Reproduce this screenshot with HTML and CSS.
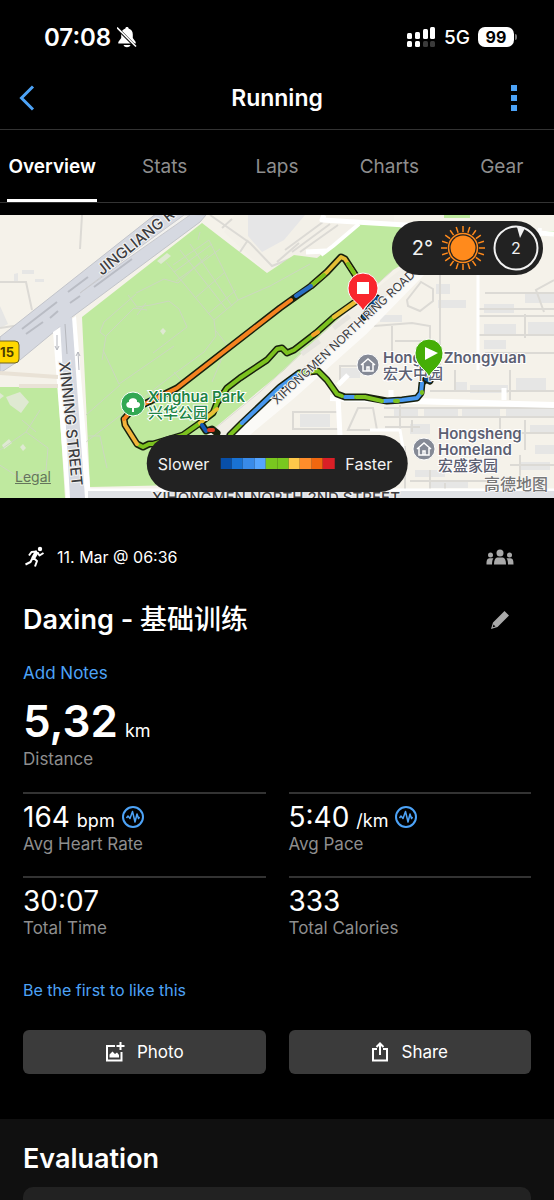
FILE: index.html
```html
<!DOCTYPE html>
<html lang="en">

<head>
    <meta charset="UTF-8">
    <meta name="viewport" content="width=device-width, initial-scale=1.0">
    <title>Running</title>
    <link rel="stylesheet" href="styles.css">
</head>

<body>
    <!-- Status bar -->
    <div class="status-bar">
        <div class="status-left">
            <span class="clock">07:08</span>
            <svg class="bell" width="20" height="22" viewBox="0 0 20 22">
                <path d="M10 1c-1 0-1.600.6-1.600 1.400C5.400 3.200 4.200 5.600 4.200 8.500v3.500L1.300 16v1.500h17.400V16l-2.900-4V8.500c0-2.900-1.200-5.300-4.200-6.100C11.600 1.600 11 1 10 1zM6.500 19c.6 1.500 1.900 2.200 3.500 2.200s2.900-.7 3.500-2.200z" fill="#fff" />
                <path d="M0 2l19 19" stroke="#000" stroke-width="3" />
                <path d="M0 1.500l19 19" stroke="#fff" stroke-width="1.600" />
            </svg>
        </div>
        <div class="status-right">
            <svg width="29" height="22" viewBox="0 0 29 22" fill="#fff">
                <rect x="0" y="7" width="5" height="6" rx="1.500" />
                <rect x="8" y="6" width="5" height="7" rx="1.500" />
                <rect x="16" y="3" width="5" height="10" rx="1.500" />
                <rect x="23" y="1" width="5" height="12" rx="1.500" />
                <rect x="0" y="15" width="5" height="6" rx="1.500" />
                <rect x="8" y="15" width="5" height="6" rx="1.500" />
                <rect x="16" y="15" width="5" height="6" rx="1.500" fill="#3a3a3a" />
                <rect x="23" y="15" width="5" height="6" rx="1.500" fill="#3a3a3a" />
            </svg>
            <span class="network">5G</span>
            <span class="battery">99</span>
        </div>
    </div>

    <!-- Header -->
    <header class="header">
        <button class="icon-button" aria-label="Back">
            <svg width="16" height="26" viewBox="0 0 16 26" fill="none" stroke="#4da3f7" stroke-width="3">
                <path d="M14 1.500L2.500 13L14 24.500" />
            </svg>
        </button>
        <h1>Running</h1>
        <button class="icon-button menu-button" aria-label="More">
            <svg width="6" height="26" viewBox="0 0 6 26" fill="#4da3f7">
                <rect width="6" height="6" />
                <rect y="10" width="6" height="6" />
                <rect y="20" width="6" height="6" />
            </svg>
        </button>
    </header>

    <!-- Tabs -->
    <nav class="tabs">
        <a href="#overview" class="tab active">Overview</a>
        <a href="#stats" class="tab">Stats</a>
        <a href="#laps" class="tab">Laps</a>
        <a href="#charts" class="tab">Charts</a>
        <a href="#gear" class="tab">Gear</a>
    </nav>

    <!-- Map -->
    <section class="map">
        <svg class="map-canvas" viewBox="0 215 554 283" preserveAspectRatio="xMidYMid slice">
            <rect x="-400" y="215" width="1400" height="283" fill="#f5f2ea" />

            <!-- Blocks and buildings -->
            <path d="M234 215H394V225L361 223L317 258L294 255L267 273L245 252L224 232z" fill="#f3f0e8" />
            <path d="M248 215H305L284 240L262 252L248 236z" fill="#e6e6e7" />
            <g fill="#e6e6e5">
                <path d="M22 270h12v4H22zM14 274l4-1v8l-4 1zM35 279h9v3H35zM0 306l8 18-8 4z" />
                <path d="M484 304h30v9h-30zM484 324h32v10h-32zM484 340h22v9h-22zM525 292h29v11h-29zM528 322h26v14h-26zM436 284h14v10h-14zM438 300h28v8h-28zM380 315h22v7h-22z" />
                <path d="M394 408h24v8h-24zM424 408h34v8h-34zM462 408h38v8h-38zM506 408h48v8h-48zM300 414h30v13h-30zM340 368h20v10h-20zM470 385h38v8h-38zM516 378h30v12h-30zM455 382h12v9h-12zM410 424h20v10h-20zM530 425h24v9h-24zM535 445h19v9h-19zM520 462h30v8h-30zM415 470h30v7h-30zM430 482h38v6h-38z" />
            </g>
            <g fill="none" stroke="#dcdad5" stroke-width="2">
                <path d="M82 215l-2 34M0 282h26l6 28M0 328l20-3M210 215l40 28 22 23 20-8M222 228l10-9M248 240l-8 12" />
                <path d="M285 250l38-28M292 252l38-28M300 252l38-27M277 262l22-19" />
                <path d="M407 300l14-18 12 7v12l-13 10-12-5zM374 326l38-3 18 3v15H395M392 326v25M440 275v90M478 275v90M478 309h76M478 316h76M478 335h76M525 314v24M485 293h69M485 353h69M554 280l-18 10 8 22" />
                <path d="M293 412h47v17h-47zM348 430l10-22h15l4 22zM384 408h170M384 417h170M400 405v30M412 420v12M500 418v14M525 420v30M385 427h35M510 433h44M405 446v50M430 470v26M445 483v14M510 465h44M410 481h78M520 455v30M340 384v-18h25M455 370v22M510 370v30M430 391h124" />
            </g>

            <!-- Parks -->
            <g fill="#bfe99f">
                <path d="M82 317L202 223L267 273L294 255L317 258L361 223L400 225L410 260L393 270L310 345L284 371L260 392L205 437L180 485L90 487z" />
                <path d="M0 387H58L65 498H0z" />
                <path d="M444 215h26v3h-26zM544 231h10v5h-10z" />
            </g>
            <g fill="#dfe9d2">
                <path d="M157 261l10-8 4 3-10 8zM160 331l3-3 3 3-3 4z" />
                <path d="M6 397l14-5 9 10-8 11-11-8zM2 445l7-6 3 4-8 6zM20 447l3-3 3 4-3 3zM0 393l4 3-4 3z" />
            </g>
            <g fill="none" stroke="#ccd8c0" stroke-width="1">
                <path d="M166 262l48 58 24-20-29-60-36 25M180 250l47 60M190 244l42 62M176 281l44-32M195 298l30-26M208 314l28-24M174 272l38-28M200 232l-2 8" />
                <path d="M102 360l4-24 28-28 13 2M105 336l-5-4 4-10 32-28M128 295l9 12 14-2 18-4 10 8 8 18-34 26M137 315l9-12M136 293l28-14 14 4 30-28" />
                <path d="M214 320l2 16-12 16-30 22-88 68M216 331l12 15M238 300l32-14 40-22M103 350l16 34 55-38M86 415l34-30M88 436h12l7 32M0 450l26-18 14-22M26 432l22 16-2 22-26 8-22-14M22 420l14 12M222 358l-10 24M174 372l10 12" />
            </g>

            <!-- Ring road -->
            <path d="M213 437L290 373L360 309L440 246" fill="none" stroke="#f1eee6" stroke-width="12" />
            <path d="M211 432L260 392L310 345L393 270M222 438L290 380L345 330M236 438L280 402" fill="none" stroke="#dfdcd5" stroke-width="1" />
            <path d="M232 442L290 394L362 330L440 250" fill="none" stroke="#fbfaf7" stroke-width="12" />
            <path d="M300 352l18-13 3 4-18 13zM332 326l16-12 3 4-16 12z" fill="#e6e4de" />

            <!-- Minor streets -->
            <g fill="none" stroke="#fff" stroke-linejoin="round">
                <path d="M306 252l20-1M324 215l-2 5 232 14" stroke-width="5" />
                <path d="M359 224l-26 22-12 9M540 228l-4 30" stroke-width="4" />
                <path d="M330 398l80 3 144 4" stroke-width="6" />
                <path d="M338 396l2 40M338 385l10-10M391 400v-10M504 400v-12" stroke-width="5" />
                <path d="M478 275v95M370 430h30l5 30" stroke-width="3" />
            </g>

            <!-- Jingliang road and Xinning street -->
            <path d="M0 337L157 213L206 215L200 222L72 317L20 360L0 373z" fill="#d6d9e1" stroke="#c2c4ca" />
            <path d="M80 293L123 262L150 243L190 215L184 215L140 247z" fill="#f2f1ee" stroke="#c8c9cd" />
            <path d="M22 329L57 302M26 334L43 322M50 318L58 311M68 292L88 277M70 303L80 296M94 287L132 259" fill="none" stroke="#b9bcc4" stroke-width="2" />
            <path d="M53 332L76 316L91 498H66z" fill="#fff" />
            <path d="M60 322L72 317L85 498H70z" fill="#d6d9e1" />
            <path d="M57 335v14M55 346l2 4 2-4M65 324l2 30M78 352l1 18M76 356l2-4 2 4" fill="none" stroke="#b5b7bd" />
            <path d="M58 377l-58-4M58 386H19" stroke="#e9e2d6" stroke-width="4" />
            <path d="M88 490H800" stroke="#fff" stroke-width="3" />
            <path d="M88 495H800" stroke="#dfe1e5" stroke-width="8" />

            <!-- Street names -->
            <g class="street-label">
                <text font-size="15" transform="translate(102 276) rotate(-39)">JINGLIANG ROAD</text>
                <text font-size="15" transform="translate(59 362) rotate(84)">XINNING STREET</text>
                <text font-size="15" x="152" y="503">XIHONGMEN NORTH 2ND STREET</text>
            </g>

            <!-- Route: black casing first, speed colours on top -->
            <g fill="none" stroke-linejoin="round" stroke-linecap="round">
                <g stroke="#17200d" stroke-width="7">
                    <path d="M183 435L200 423L213 413L217 403L227 388L240 378L267 360L277 349L282 348L287 353L294 350L316 333L334 317L358 300M183 435L153 444L149 444L143 447L137 444L125 425L124 419L132 410L177 388L213 360L280 308L294 298L311 286L327 272L341 257L345 259L356 276L362 292" />
                    <path d="M217 433L212 429L206 431L202 425M230 435L242 423L280 387L299 373L318 371L327 380L337 394L345 397L365 397L387 401L402 400L417 398L421 393L422 383L426 379L430 381M364 317L377 298" />
                </g>
                <g stroke-width="4">
                    <path d="M183 435L200 423L213 413L217 403L227 388L240 378L267 360L277 349L282 348L287 353L294 350L316 333L334 317" stroke="#7cc21f" />
                    <path d="M334 317L358 300M200 423L217 409" stroke="#eabd35" />
                    <path d="M313 335L318 332" stroke="#f4a127" />
                    <path d="M183 435L153 444L149 444L143 447L137 444" stroke="#7cc21f" />
                    <path d="M137 444L125 425L124 419" stroke="#f1b43b" />
                    <path d="M124 419L132 410L177 388L213 360L280 308L291 300" stroke="#f58220" />
                    <path d="M311 286L327 272L341 257L345 259L356 276L362 292" stroke="#e5bd35" />
                    <path d="M313 284L324 275M348 264L354 273" stroke="#7cc21f" />
                    <path d="M296 296L311 286" stroke="#286fc4" />
                    <path d="M202 425L206 431" stroke="#1559b5" />
                    <path d="M209 430L213 430" stroke="#dc3c22" />
                    <path d="M230 435L242 423" stroke="#7cc21f" />
                    <path d="M242 423L280 387L299 373M345 397L354 397M384 401L402 400L417 398L421 393L422 383" stroke="#4797ee" />
                    <path d="M299 373L318 371L327 380L337 394L342 396M356 397L365 397L382 401" stroke="#7cc21f" />
                    <path d="M395 401L398 401M422 392L422 393" stroke="#7cc21f" />
                    <path d="M364 317L377 298M426 379L430 381" stroke="#124784" />
                </g>
            </g>
            <g class="street-label">
                <text class="thin" font-size="12" transform="translate(277 405) rotate(-43)">XIHONGMEN NORTH RING ROAD</text>
            </g>

            <!-- Places -->
            <circle cx="133" cy="404" r="12" fill="#32a853" stroke="#fff" stroke-width="1" />
            <path d="M132 412v-4c-7 1-7-6-3-6-1-5 9-5 8 0 5 0 4 7-3 6v4z" fill="#fff" />
            <g class="place park">
                <text x="148" y="402">Xinghua Park</text>
                <text class="chinese" x="148" y="418">兴华公园</text>
            </g>
            <g fill="#858a96" stroke="#fff">
                <circle cx="368" cy="365" r="11" />
                <circle cx="424" cy="449" r="11" />
            </g>
            <g fill="none" stroke="#fff" stroke-width="1.500">
                <path d="M361 365l7-6 7 6M363 364v7h10v-7M367 371v-4h2v4" />
                <path d="M417 449l7-6 7 6M419 448v7h10v-7M423 455v-4h2v4" />
            </g>
            <g class="place">
                <text x="383" y="363">Hongda Zhongyuan</text>
                <text class="chinese" x="383" y="379">宏大中园</text>
                <text x="438" y="439">Hongsheng</text>
                <text x="438" y="455">Homeland</text>
                <text class="chinese" x="438" y="471">宏盛家园</text>
            </g>
            <text class="provider" x="484" y="490">高德地图</text>

            <!-- Road shield -->
            <rect x="-20" y="341" width="39" height="22" rx="4" fill="#ffd800" stroke="#6e6322" />
            <text class="shield" x="14" y="357" text-anchor="end">G315</text>

            <!-- Start and finish pins -->
            <path d="M363 311C359 302 348 300 348 288a15 15 0 0 1 30 0c0 12-11 14-15 23z" fill="#f9262d" stroke="#fff" />
            <rect x="357" y="282" width="12" height="12" fill="#fff" />
            <path d="M429 377C425 368 415 366 415 353a14 14 0 0 1 28 0c0 13-10 15-14 24z" fill="#45ae06" stroke="#fff" />
            <path d="M425 347l13 6-13 7z" fill="#fff" />
        </svg>

        <a href="#legal" class="legal">Legal</a>

        <div class="weather">
            <span class="temperature">2°</span>
            <svg width="44" height="44" viewBox="-22 -22 44 44" fill="none" stroke="#ff8a1c">
                <circle r="12.500" fill="#ff8a1c" stroke="none" />
                <circle r="14.500" stroke-width="1.500" />
                <path d="M0-16V-22M0 16V22M-16 0H-22M16 0H22M4.900-15.200L6.800-20.900M9.400-12.900L12.900-17.800M12.900-9.400L17.800-12.900M15.200-4.900L20.900-6.800M15.200 4.900L20.900 6.800M12.900 9.400L17.800 12.900M9.400 12.900L12.900 17.800M4.900 15.200L6.800 20.900M-4.900-15.200L-6.800-20.900M-9.400-12.900L-12.900-17.800M-12.900-9.400L-17.800-12.900M-15.200-4.900L-20.900-6.800M-15.200 4.900L-20.900 6.800M-12.900 9.400L-17.800 12.900M-9.400 12.900L-12.900 17.800M-4.900 15.200L-6.800 20.900" stroke-width="1.500" />
            </svg>
            <div class="wind">
                <svg width="46" height="46" viewBox="-23 -23 46 46">
                    <circle r="21.500" fill="none" stroke="#f2f2f2" stroke-width="2" />
                    <path d="M1-21L9-20L4-10z" fill="#f2f2f2" />
                </svg>
                <span>2</span>
            </div>
        </div>

        <div class="legend">
            <span>Slower</span>
            <div class="legend-bar">
                <i class="c1"></i><i class="c2"></i><i class="c3"></i><i class="c4"></i><i class="c5"></i><i class="c5"></i><i class="c6"></i><i class="c7"></i><i class="c8"></i><i class="c9"></i>
            </div>
            <span>Faster</span>
        </div>
    </section>

    <!-- Activity -->
    <main class="activity">
        <div class="activity-date">
            <svg width="24" height="22" viewBox="0 0 24 22" fill="none" stroke="#fff" stroke-linejoin="round">
                <circle cx="17" cy="3" r="2.200" fill="#fff" stroke="none" />
                <path d="M14 5.500L10 12.500" stroke-width="4" />
                <path d="M14 5.500L8.500 6L6 9.500M14.500 6.500L16.500 9.500L20.500 7M10.500 12L14 15L12 20.500M9.500 12L7.500 16L2.500 18.500" stroke-width="2" />
            </svg>
            <time>11. Mar @ 06:36</time>
            <button class="icon-button privacy" aria-label="Privacy">
                <svg width="28" height="16" viewBox="0 0 28 16" fill="#a9a9a9">
                    <circle cx="14" cy="4" r="3.500" />
                    <circle cx="4.500" cy="6" r="2.500" />
                    <circle cx="23.500" cy="6" r="2.500" />
                    <path d="M8 15.500c0-4 1-6.500 3-7h6c2 .5 3 3 3 7zM.500 15.500c0-4 .5-6 3-6.200h4c-1 1.200-1.500 3.500-1.500 6.200zM27.500 15.500c0-4-.5-6-3-6.200h-4c1 1.200 1.500 3.500 1.500 6.200z" />
                </svg>
            </button>
        </div>

        <div class="activity-title">
            <h2>Daxing - <span class="chinese">基础训练</span></h2>
            <button class="icon-button edit" aria-label="Edit name">
                <svg width="18" height="18" viewBox="0 0 18 18" fill="#a9a9a9">
                    <path d="M13.500 0L18 4.500L6.500 16L0 18L2 11.500zM2.500 13.500L1.700 16.300L4.500 15.500z" fill-rule="evenodd" />
                </svg>
            </button>
        </div>

        <a href="#notes" class="notes">Add Notes</a>

        <div class="distance">
            <p class="value">5,32 <small>km</small></p>
            <p class="label">Distance</p>
        </div>

        <div class="stats">
            <div class="stat">
                <p class="value">164 <small>bpm</small>
                    <svg class="pulse" width="22" height="22" viewBox="0 0 22 22" fill="none" stroke="#4da3f7" stroke-linejoin="round">
                        <circle cx="11" cy="11" r="10" stroke-width="2" />
                        <path d="M4.500 12L6 10L8 12.500L10.500 5.500L13 16L15 8L16.500 12.500L17.500 11" stroke-width="1.500" />
                    </svg>
                </p>
                <p class="label">Avg Heart Rate</p>
            </div>
            <div class="stat">
                <p class="value">5:40 <small>/km</small>
                    <svg class="pulse" width="22" height="22" viewBox="0 0 22 22" fill="none" stroke="#4da3f7" stroke-linejoin="round">
                        <circle cx="11" cy="11" r="10" stroke-width="2" />
                        <path d="M4.500 12L6 10L8 12.500L10.500 5.500L13 16L15 8L16.500 12.500L17.500 11" stroke-width="1.500" />
                    </svg>
                </p>
                <p class="label">Avg Pace</p>
            </div>
            <div class="stat">
                <p class="value">30:07</p>
                <p class="label">Total Time</p>
            </div>
            <div class="stat">
                <p class="value">333</p>
                <p class="label">Total Calories</p>
            </div>
        </div>

        <a href="#like" class="like">Be the first to like this</a>

        <div class="actions">
            <button class="action">
                <svg width="20" height="20" viewBox="0 0 20 20" fill="none" stroke="#fff" stroke-width="2">
                    <path d="M10 4H2V18.500H16.500V10M15.500 0V8M11.500 4H19.500" />
                    <path d="M4.500 15.500V12.500L7.500 9.500L10 12L12 10.500L14 13V15.500z" fill="#fff" stroke="none" />
                </svg>
                Photo
            </button>
            <button class="action">
                <svg width="18" height="20" viewBox="0 0 18 20" fill="none" stroke="#fff" stroke-width="2">
                    <path d="M6 7H2V18.500H16V7H12M9 13V2M5.500 5L9 1.500L12.500 5" />
                </svg>
                Share
            </button>
        </div>
    </main>

    <!-- Evaluation -->
    <section class="evaluation">
        <h2>Evaluation</h2>
        <div class="card"></div>
    </section>
</body>

</html>
```

FILE: styles.css
```css
* {
    box-sizing: border-box;
}

body {
    margin: 0;
    min-height: 100vh;
    display: flex;
    flex-direction: column;
    background-color: #000;
    color: #fff;
    font-family: Inter, "Noto Sans CJK SC", sans-serif;
    font-size: 17px;
}

h1,
h2,
p {
    margin: 0;
}

a {
    color: #4da3f7;
    text-decoration: none;
}

svg {
    display: block;
    flex-shrink: 0;
}

button {
    border: none;
    background: none;
    color: inherit;
    font: inherit;
    cursor: pointer;
}

.icon-button {
    display: flex;
    padding: 0;
}

.chinese {
    font-weight: 500;
}

/* Status bar */
.status-bar {
    display: flex;
    justify-content: space-between;
    align-items: center;
    height: 66px;
    padding: 8px 40px 0 44px;
}

.status-left,
.status-right {
    display: flex;
    align-items: center;
}

.status-left {
    gap: 6px;
}

.clock {
    font-size: 24px;
    font-weight: 600;
}

.status-right {
    gap: 8px;
}

.network {
    font-size: 19px;
    font-weight: 500;
}

.battery {
    position: relative;
    width: 36px;
    border-radius: 7px;
    background-color: #fff;
    color: #000;
    font-size: 16px;
    font-weight: 700;
    line-height: 20px;
    text-align: center;
}

.battery::after {
    content: "";
    position: absolute;
    top: 7px;
    right: -3px;
    width: 2px;
    height: 6px;
    border-radius: 0 2px 2px 0;
    background-color: #777;
}

/* Header */
.header {
    display: grid;
    grid-template-columns: 1fr auto 1fr;
    align-items: center;
    height: 64px;
    padding: 0 37px 0 19px;
    border-bottom: 1px solid #333;
}

.header h1 {
    padding-left: 18px;
    font-size: 23px;
    font-weight: 600;
}

.menu-button {
    justify-self: end;
}

/* Tabs */
.tabs {
    display: grid;
    grid-template-columns: repeat(5, 1fr);
    height: 73px;
    margin: 0 -4px;
    border-bottom: 1px solid #333;
}

.tab {
    margin: 0 11px;
    padding-top: 5px;
    border-bottom: 3px solid transparent;
    color: #8e8e8e;
    font-size: 19px;
    line-height: 64px;
    text-align: center;
}

.tab.active {
    border-bottom-color: #fff;
    color: #fff;
    font-weight: 600;
}

/* Map */
.map {
    position: relative;
    height: 283px;
    margin-top: 12px;
    overflow: hidden;
}

.map-canvas {
    width: 100%;
    height: 100%;
}

.street-label {
    fill: #3d3d40;
    font-weight: 500;
    stroke: #f4f4f4;
    stroke-width: 2px;
    paint-order: stroke;
}

.street-label .thin {
    font-weight: 400;
}

.place {
    fill: #5c6072;
    font-size: 15px;
    font-weight: 600;
    stroke: #fff;
    stroke-width: 2px;
    paint-order: stroke;
}

.park {
    fill: #208545;
}

.provider {
    fill: #777;
    font-size: 16px;
    font-weight: 500;
    stroke: #fff;
    stroke-width: 1px;
    paint-order: stroke;
}

.shield {
    fill: #4a3e00;
    font-size: 13px;
    font-weight: 700;
}

.legal {
    position: absolute;
    left: 15px;
    bottom: 13px;
    color: #64755b;
    font-size: 14px;
    text-decoration: underline;
}

.weather,
.legend {
    position: absolute;
    display: flex;
    align-items: center;
    background-color: #222;
    color: #f2f2f2;
}

.weather {
    top: 6px;
    right: 11px;
    gap: 8px;
    height: 54px;
    padding: 0 4px 0 20px;
    border-radius: 27px;
}

.temperature {
    font-size: 20px;
}

.wind {
    position: relative;
}

.wind span {
    position: absolute;
    inset: 0;
    font-size: 16px;
    line-height: 46px;
    text-align: center;
}

.legend {
    bottom: 6px;
    left: 50%;
    gap: 11px;
    height: 57px;
    padding: 0 15px 0 11px;
    border-radius: 29px;
    font-size: 16px;
    transform: translateX(-50%);
}

.legend-bar {
    display: flex;
    width: 114px;
    height: 11px;
}

.legend-bar i {
    flex: 1;
}

.c1 { background-color: #084fa8; }
.c2 { background-color: #1972d3; }
.c3 { background-color: #398be9; }
.c4 { background-color: #55a5ff; }
.c5 { background-color: #79c71f; }
.c6 { background-color: #ffc84a; }
.c7 { background-color: #ff8d2b; }
.c8 { background-color: #f1670f; }
.c9 { background-color: #da1f26; }

/* Activity */
.activity {
    padding: 47px 23px 45px;
}

.activity-date,
.activity-title {
    display: flex;
    align-items: center;
}

.activity-date {
    gap: 10px;
    height: 24px;
    font-size: 16px;
}

.privacy,
.edit {
    margin-left: auto;
}

.privacy {
    margin-right: 17px;
}

.edit {
    margin-right: 22px;
}

.activity-title {
    margin-top: 32px;
    height: 38px;
}

.activity-title h2,
.evaluation h2 {
    font-size: 27px;
    font-weight: 600;
    line-height: 40px;
}

.notes,
.like {
    display: block;
    line-height: 24px;
}

.notes {
    margin-top: 22px;
}

.value {
    display: flex;
    align-items: baseline;
    gap: 7px;
}

.value small {
    font-size: 18px;
    font-weight: 400;
    line-height: 20px;
}

.label {
    color: #8e8e8e;
    font-size: 17px;
    line-height: 22px;
}

.distance {
    margin-top: 10px;
}

.distance .value {
    font-size: 44px;
    font-weight: 600;
    line-height: 53px;
}

.stats {
    display: grid;
    grid-template-columns: 1fr 1fr;
    column-gap: 23px;
    margin-top: 22px;
}

.stat {
    height: 84px;
    padding-top: 6px;
    border-top: 2px solid #333;
}

.stat .value {
    font-size: 28px;
    line-height: 34px;
}

.stat .label {
    line-height: 20px;
}

.pulse {
    align-self: center;
}

.like {
    margin-top: 18px;
    font-size: 16px;
}

.actions {
    display: grid;
    grid-template-columns: 1fr 1fr;
    gap: 23px;
    margin-top: 28px;
}

.action {
    display: flex;
    justify-content: center;
    align-items: center;
    gap: 12px;
    height: 44px;
    border-radius: 6px;
    background-color: #3b3b3b;
}

/* Evaluation */
.evaluation {
    display: flex;
    flex: 1;
    flex-direction: column;
    padding: 20px 23px 0;
    background-color: #101010;
}

.card {
    flex: 1;
    min-height: 13px;
    margin-top: 8px;
    border-radius: 10px 10px 0 0;
    background-color: #222;
}
```
